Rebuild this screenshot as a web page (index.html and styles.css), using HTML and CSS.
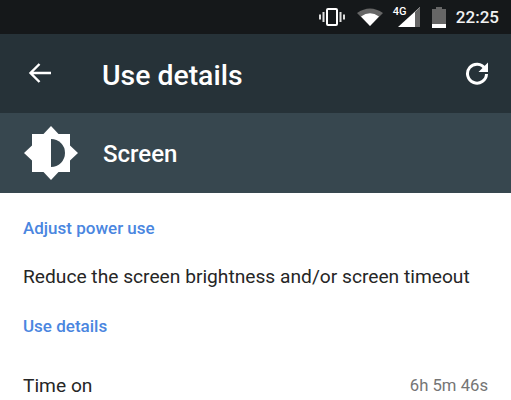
FILE: index.html
```html
<!DOCTYPE html>
<html>
<head>
    <title>Use details</title>
    <link rel="stylesheet" href="styles.css">
</head>
<body>
    <div class="status-bar">
        <svg class="icon-vibrate" width="26" height="20" viewBox="0 0 26 20">
            <rect x="8" y="2" width="10" height="16" rx="1" fill="none" stroke="#fff" stroke-width="2"/>
            <rect x="3.500" y="5" width="2" height="10" fill="#ddd"/>
            <rect x="20.500" y="5" width="2" height="10" fill="#ddd"/>
            <rect x="0" y="7.500" width="2" height="5" fill="#ddd"/>
            <rect x="24" y="7.500" width="2" height="5" fill="#ddd"/>
        </svg>
        <svg class="icon-wifi" width="26" height="18" viewBox="0 0 26 18">
            <path d="M0 5 Q13 -4 26 5 L13 18 Z" fill="#666"/>
            <path d="M4 8.500 Q13 2 22 8.500 L13 18 Z" fill="#fff"/>
        </svg>
        <div class="signal">
            <span class="signal-label">4G</span>
            <svg width="24" height="22" viewBox="0 0 24 22">
                <path d="M0 21 L22 1 V21 Z" fill="#fff"/>
                <path d="M17 6 L22 1 V21 H17 Z" fill="#666"/>
            </svg>
        </div>
        <svg class="icon-battery" width="14" height="21" viewBox="0 0 14 21">
            <path d="M4 0 H10 V2 H14 V21 H0 V2 H4 Z" fill="#666"/>
            <rect y="17" width="14" height="4" fill="#fff"/>
        </svg>
        <span class="clock">22:25</span>
    </div>

    <div class="toolbar">
        <svg class="icon-back" width="24" height="24" viewBox="0 0 24 24">
            <path d="M23 12 H2 M11.500 3 L2.500 12 L11.500 21" fill="none" stroke="#fff" stroke-width="2.400"/>
        </svg>
        <h1 class="toolbar-title">Use details</h1>
        <svg class="icon-refresh" width="24" height="24" viewBox="0 0 24 24">
            <path d="M20 7.500 A9.500 9.500 0 1 0 21.500 13" fill="none" stroke="#fff" stroke-width="3"/>
            <path d="M23 1.500 V11 H13.500 Z" fill="#fff"/>
        </svg>
    </div>

    <div class="app-header">
        <svg class="icon-brightness" width="54" height="54" viewBox="0 0 54 54">
            <path d="M27 0 L34.500 8 L46 8 L46 19.500 L54 27 L46 34.500 L46 46 L34.500 46 L27 54 L19.500 46 L8 46 L8 34.500 L0 27 L8 19.500 L8 8 L19.500 8 Z" fill="#fff"/>
            <path d="M27 13 A14 14 0 0 1 27 41 Z" fill="#37474f"/>
        </svg>
        <span class="app-name">Screen</span>
    </div>

    <div class="content">
        <h2 class="section-title">Adjust power use</h2>
        <p class="tip">Reduce the screen brightness and/or screen timeout</p>
        <h2 class="section-title">Use details</h2>
        <div class="row">
            <span class="row-label">Time on</span>
            <span class="row-value">6h 5m 46s</span>
        </div>
    </div>
</body>
</html>
```

FILE: styles.css
```css
body {
    font-family: Roboto, "Liberation Sans", sans-serif;
    background-color: #fff;
    margin: 0;
    padding: 0;
    height: 400px;
    overflow: hidden;
}

.status-bar {
    background-color: #15181a;
    height: 34px;
    display: flex;
    align-items: center;
    justify-content: flex-end;
    padding-right: 12px;
}

.icon-vibrate {
    margin-right: 12px;
}

.icon-wifi {
    margin-right: 15px;
}

.signal {
    position: relative;
    width: 24px;
    height: 22px;
    margin-right: 10px;
}

.signal svg {
    display: block;
}

.signal-label {
    position: absolute;
    left: -5px;
    top: -1px;
    font-size: 11px;
    font-weight: 500;
    color: #fff;
}

.icon-battery {
    margin-right: 10px;
}

.clock {
    color: #f1f1f1;
    font-size: 17px;
    font-weight: 500;
}

.toolbar {
    background-color: #263238;
    height: 79px;
    display: flex;
    align-items: center;
    padding: 0 22px 2px 28px;
    box-sizing: border-box;
}

.toolbar-title {
    color: #fff;
    font-size: 28.400px;
    font-weight: 500;
    line-height: 36px;
    margin: 6px 0 0 50px;
    flex: 1;
}

.app-header {
    background-color: #37474f;
    height: 80px;
    display: flex;
    align-items: center;
    padding-left: 24px;
    box-sizing: border-box;
}

.app-name {
    color: #fff;
    font-size: 24px;
    font-weight: 500;
    margin: 2px 0 0 25px;
}

.content {
    padding: 24px 23px 0;
}

.section-title {
    color: #4a86e0;
    font-size: 17px;
    font-weight: 500;
    line-height: 22px;
    margin: 0;
}

.tip {
    color: #262626;
    font-size: 19.200px;
    line-height: 26px;
    margin: 25px 0 25px;
}

.row {
    display: flex;
    justify-content: space-between;
    align-items: center;
    margin-top: 36px;
    line-height: 26px;
}

.row-label {
    color: #262626;
    font-size: 19.200px;
}

.row-value {
    color: #757575;
    font-size: 16.700px;
}
```
